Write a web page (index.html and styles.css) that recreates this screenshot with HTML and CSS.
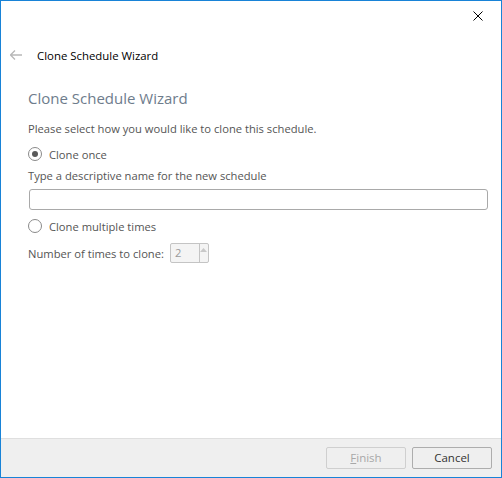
FILE: index.html
```html
<!DOCTYPE html>
<html lang="en">
<head>
    <meta charset="UTF-8">
    <title>Clone Schedule Wizard</title>
    <link rel="stylesheet" href="styles.css">
</head>
<body>
    <div class="window">
        <div class="titlebar">
            <button class="close-btn" title="Close">
                <svg width="10" height="10" viewBox="0 0 10 10"><path d="M0.5 0.5 L9.5 9.5 M9.5 0.5 L0.5 9.5" stroke="#000" stroke-width="1"/></svg>
            </button>
        </div>
        <div class="nav-row">
            <span class="back-arrow">
                <svg width="12" height="10" viewBox="0 0 12 10"><path d="M0.5 5 H12 M5 0.5 L0.5 5 L5 9.5" stroke="#b8b8b8" stroke-width="1.3" fill="none"/></svg>
            </span>
            <span class="nav-title">Clone Schedule Wizard</span>
        </div>
        <div class="content">
            <h1 class="page-title">Clone Schedule Wizard</h1>
            <p class="intro">Please select how you would like to clone this schedule.</p>
            <label class="radio-row">
                <span class="radio checked"></span>
                <span>Clone once</span>
            </label>
            <p class="field-label">Type a descriptive name for the new schedule</p>
            <input type="text" class="name-input">
            <label class="radio-row multi">
                <span class="radio"></span>
                <span>Clone multiple times</span>
            </label>
            <div class="count-row">
                <span>Number of times to clone:</span>
                <div class="spinner">
                    <span class="spin-value">2</span>
                    <span class="spin-btn">
                        <svg width="7" height="4" viewBox="0 0 7 4"><path d="M0 4 L3.5 0 L7 4 Z" fill="#c8c8c8"/></svg>
                    </span>
                </div>
            </div>
        </div>
        <div class="footer">
            <button class="btn" disabled><u>F</u>inish</button>
            <button class="btn">Cancel</button>
        </div>
    </div>
</body>
</html>
```

FILE: styles.css
```css
body {
    margin: 0;
    padding: 0;
    background-color: #fff;
    font-family: "Open Sans", "Noto Sans", sans-serif;
}

.window {
    width: 502px;
    height: 478px;
    box-sizing: border-box;
    border: 1px solid #1883d7;
    display: flex;
    flex-direction: column;
    background-color: #fff;
}

.titlebar {
    height: 29px;
    display: flex;
    justify-content: flex-end;
}

.close-btn {
    width: 46px;
    height: 29px;
    border: none;
    background: none;
    padding: 0;
    display: flex;
    align-items: center;
    justify-content: center;
}

.nav-row {
    height: 50px;
    display: flex;
    align-items: center;
}

.back-arrow {
    width: 12px;
    margin-left: 9px;
    margin-right: 15px;
    display: flex;
}

.nav-title {
    font-size: 11.4px;
    color: #000;
}

.content {
    flex: 1;
    padding: 0 14px 0 27px;
    font-size: 11.2px;
    color: #555;
}

.page-title {
    margin: 7px 0 0 0;
    font-size: 15px;
    font-weight: normal;
    color: #6e7c8c;
    line-height: 22px;
}

.intro {
    margin: 12px 0 0 0;
    line-height: 16px;
}

.radio-row {
    display: flex;
    align-items: center;
    gap: 7px;
    margin-top: 9px;
    height: 16px;
}

.radio-row.multi {
    margin-top: 8px;
}

.radio {
    width: 12px;
    height: 12px;
    border: 1px solid #8a8a8a;
    border-radius: 50%;
    box-sizing: content-box;
    display: flex;
    align-items: center;
    justify-content: center;
    background: #fff;
}

.radio.checked::after {
    content: "";
    width: 6px;
    height: 6px;
    border-radius: 50%;
    background-color: #5a5a5a;
}

.field-label {
    margin: 6px 0 0 0;
    line-height: 16px;
}

.name-input {
    display: block;
    width: 459px;
    height: 21px;
    box-sizing: border-box;
    margin: 5px 0 0 1px;
    border: 1px solid #a9a9a9;
    border-radius: 3px;
    outline: none;
}

.count-row {
    display: flex;
    align-items: center;
    gap: 6px;
    margin-top: 9px;
}

.spinner {
    display: flex;
    width: 39px;
    height: 20px;
    box-sizing: border-box;
    border: 1px solid #c4c4c4;
    border-radius: 2px;
    background-color: #f4f4f4;
}

.spin-value {
    width: 24px;
    padding-left: 4px;
    line-height: 18px;
    color: #9a9a9a;
    border-right: 1px solid #c4c4c4;
}

.spin-btn {
    flex: 1;
    display: flex;
    justify-content: center;
    padding-top: 4px;
}

.footer {
    height: 38px;
    border-top: 1px solid #dfdfdf;
    background-color: #efefef;
    display: flex;
    justify-content: flex-end;
    align-items: center;
    gap: 6px;
    padding-right: 9px;
}

.btn {
    width: 80px;
    height: 22px;
    border: 1px solid #adadad;
    border-radius: 2px;
    background-color: #efefef;
    font-family: "Open Sans", "Noto Sans", sans-serif;
    font-size: 11.5px;
    color: #333;
    padding: 0;
    margin-bottom: 1px;
}

.btn:disabled {
    border-color: #cfcfcf;
    color: #a8a8a8;
}

.btn u {
    text-decoration: underline;
}
```
